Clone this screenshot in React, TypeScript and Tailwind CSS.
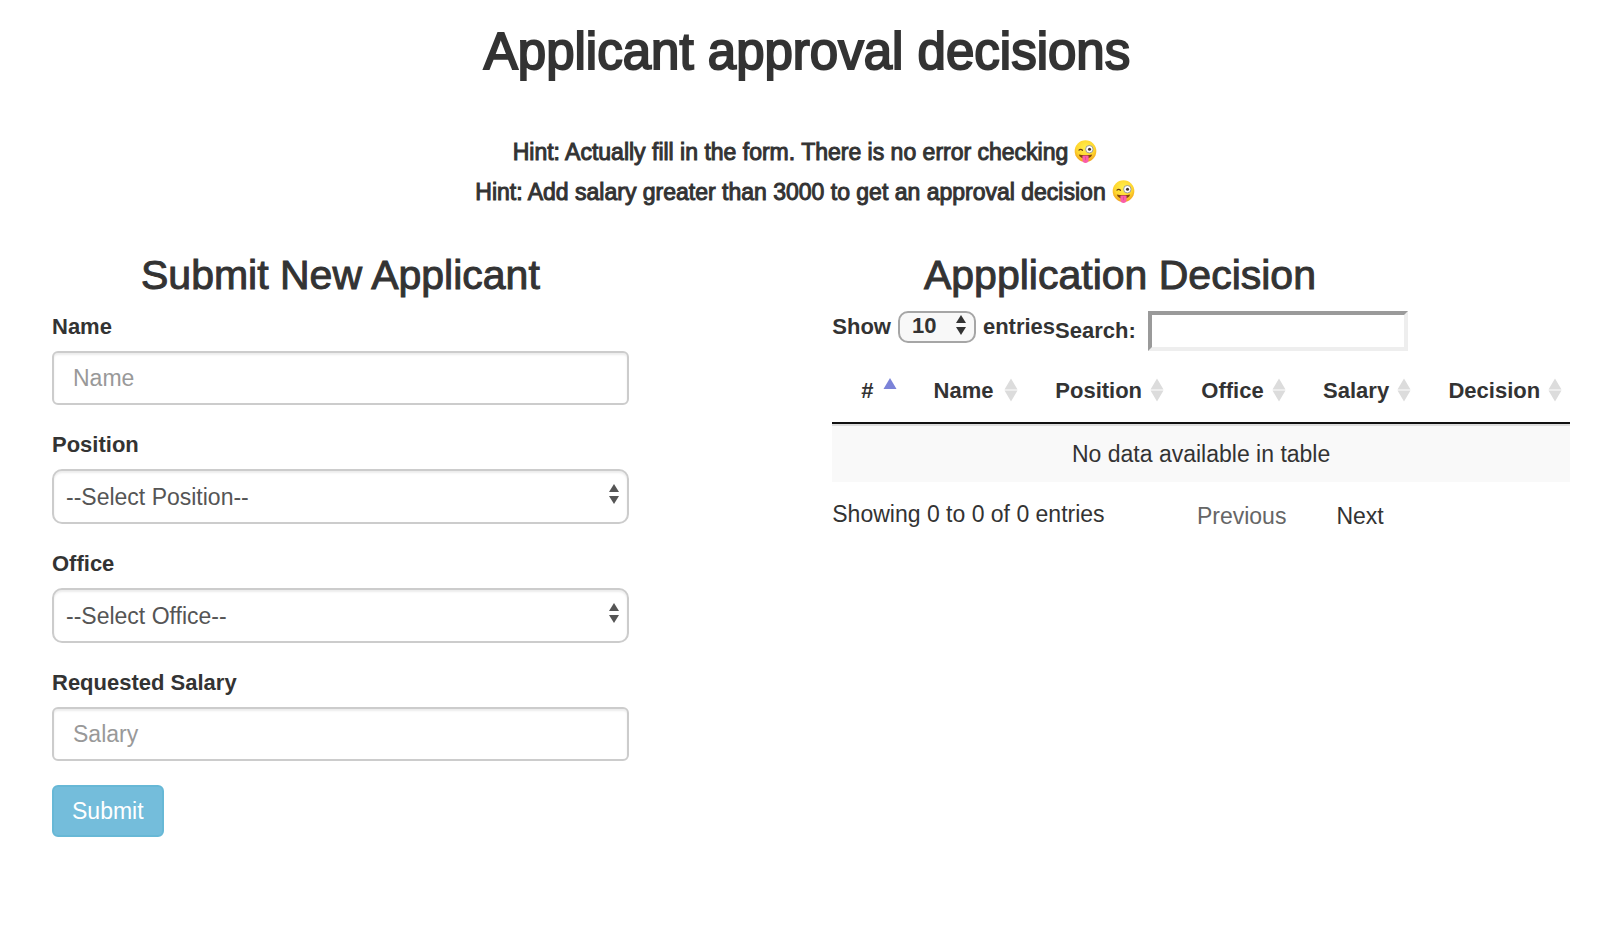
import React from "react";

function WinkingFace() {
  return (
    <svg viewBox="0 0 24 25" className="h-6 w-[23px] shrink-0" role="img" aria-label="winking face with tongue">
      <defs>
        <radialGradient id="face" cx="50%" cy="35%" r="65%">
          <stop offset="0" stopColor="#fff04e" />
          <stop offset="0.65" stopColor="#ffd62e" />
          <stop offset="1" stopColor="#f0a01c" />
        </radialGradient>
      </defs>
      <circle cx="12" cy="11.500" r="11.3" fill="url(#face)" />
      <path d="M5.200 10.600c1-1 2.600-1 3.600.1" stroke="#6b3f10" strokeWidth="1.300" strokeLinecap="round" fill="none" />
      <circle cx="16" cy="9.600" r="3.900" fill="#fff" stroke="#8f8f8f" strokeWidth="0.900" />
      <circle cx="16.200" cy="9.600" r="1.600" fill="#40332c" />
      <path d="M5 15c3.400.9 10.600.9 14 0-.6 2.600-3.300 4.400-7 4.400s-6.400-1.800-7-4.400z" fill="#84430f" />
      <path d="M8.800 16.500c1.900-.6 4.500-.6 6.400 0v4.400c0 2-1.300 3.200-3.200 3.200s-3.200-1.200-3.200-3.200z" fill="#fb5ea8" />
      <path d="M12 17.500v3.500" stroke="#e0408c" strokeWidth="0.700" />
    </svg>
  );
}

function SelectArrows({ className }: { className: string }) {
  return (
    <svg viewBox="0 0 10 20" className={"pointer-events-none absolute h-5 w-[10px] " + className} fill="currentColor" aria-hidden="true">
      <path d="M5 0l5 8H0zM5 20l5-8H0z" />
    </svg>
  );
}

function SortIcon({ active }: { active: boolean }) {
  return (
    <svg viewBox="0 0 14 24" className="h-6 w-[14px] shrink-0" aria-hidden="true">
      {active ? (
        <path d="M7 0l6.500 11h-13z" fill="#7b83d8" />
      ) : (
        <path d="M7 0.500l6.500 11h-13zM7 23.500l6.500-11h-13z" fill="#dcdcdc" />
      )}
    </svg>
  );
}

const heading = "text-center text-[41px] leading-[44px] [-webkit-text-stroke:1px_#333]";
const label = "text-[22px] leading-8 font-bold";
const field =
  "w-full border-2 border-[#ccc] bg-white text-[23px] text-[#555] shadow-[inset_0_2px_2px_rgba(0,0,0,0.075)] placeholder:text-[#999]";

function TextField({ id, title, placeholder }: { id: string; title: string; placeholder: string }) {
  return (
    <div className="flex flex-col gap-2">
      <label htmlFor={id} className={label}>{title}</label>
      <input id={id} type="text" placeholder={placeholder} className={field + " h-[54px] rounded-md px-[19px]"} />
    </div>
  );
}

function SelectField({ id, title, prompt, options }: { id: string; title: string; prompt: string; options: string[] }) {
  return (
    <div className="flex flex-col gap-2">
      <label htmlFor={id} className={label}>{title}</label>
      <div className="relative text-[#555]">
        <select id={id} className={field + " block h-[55px] appearance-none rounded-[10px] px-3"}>
          <option>{prompt}</option>
          {options.map((o) => <option key={o}>{o}</option>)}
        </select>
        <SelectArrows className="right-[10px] top-[15px]" />
      </div>
    </div>
  );
}

const columns = [
  { name: "#", width: "w-[9.8%]" },
  { name: "Name", width: "w-[16.5%]" },
  { name: "Position", width: "w-[19.8%]" },
  { name: "Office", width: "w-[16.5%]" },
  { name: "Salary", width: "w-[17%]" },
  { name: "Decision", width: "w-[20.4%]" },
];

export default function App() {
  return (
    <main className="min-h-screen bg-white pt-6 pr-[54px] pb-10 pl-[52px] font-['Liberation_Sans',Arial,sans-serif] text-[23px] leading-8 text-[#333]">
      <header className="pr-2 text-center">
        <h1 className="text-[51px] leading-[56px] [-webkit-text-stroke:2px_#333]">Applicant approval decisions</h1>
        <div className="mt-14 flex flex-col items-center gap-2 pr-1 text-[23px] leading-8 [-webkit-text-stroke:1px_#333]">
          <p className="flex items-center gap-[6px]">Hint: Actually fill in the form. There is no error checking <WinkingFace /></p>
          <p className="flex items-center gap-[6px]">Hint: Add salary greater than 3000 to get an approval decision <WinkingFace /></p>
        </div>
      </header>

      <div className="mt-[45px] flex items-start justify-between">
        <section className="w-[38%]">
          <h2 className={heading}>Submit New Applicant</h2>
          <form className="mt-[14px] flex flex-col gap-6" onSubmit={(e) => e.preventDefault()}>
            <TextField id="name" title="Name" placeholder="Name" />
            <SelectField id="position" title="Position" prompt="--Select Position--" options={["Developer", "Manager"]} />
            <SelectField id="office" title="Office" prompt="--Select Office--" options={["London", "New York"]} />
            <TextField id="salary" title="Requested Salary" placeholder="Salary" />
            <button type="submit" className="h-[52px] self-start rounded-md border-2 border-[#67b8d6] bg-[#74bddb] px-[18px] text-[23px] text-white">
              Submit
            </button>
          </form>
        </section>

        <section className="w-[48.6%]">
          <div className="w-[78%]">
            <h2 className={heading}>Appplication Decision</h2>
            <div className="mt-[14px] flex items-start text-[22px] font-bold">
              <label className="flex items-center gap-[7px]">
                Show
                <span className="relative">
                  <select className="block h-8 w-[78px] appearance-none rounded-[10px] border-2 border-[#a6a6a6] bg-[#f8f8f8] pb-[2px] pl-3 leading-[26px]">
                    <option>10</option>
                    <option>25</option>
                    <option>50</option>
                    <option>100</option>
                  </select>
                  <SelectArrows className="right-[10px] top-1" />
                </span>
                entries
              </label>
              <label className="flex min-w-0 flex-1 items-center gap-3">
                Search:
                <input type="search" className="h-10 w-full min-w-0 border-4 border-t-[#9a9a9a] border-r-[#eee] border-b-[#eee] border-l-[#9a9a9a] bg-white px-1" />
              </label>
            </div>
          </div>

          <table className="mt-4 w-full table-fixed border-separate border-spacing-0">
            <thead>
              <tr>
                {columns.map((c, i) => (
                  <th key={c.name} className={c.width + " border-b-2 border-[#111] p-0"}>
                    <button type="button" className="flex h-[55px] w-full items-start justify-between pt-2 pr-2 pl-[29px] text-[22px] leading-8 font-bold">
                      {c.name}
                      <span className="pt-[3px]">
                        <SortIcon active={i === 0} />
                      </span>
                    </button>
                  </th>
                ))}
              </tr>
            </thead>
            <tbody>
              <tr className="bg-[#f9f9f9]">
                <td colSpan={6} className="h-[58px] border-t-2 border-[#ddd] p-0 text-center">No data available in table</td>
              </tr>
            </tbody>
          </table>

          <div className="mt-4 flex w-[78%] items-start justify-between">
            <p>Showing 0 to 0 of 0 entries</p>
            <nav className="mt-[2px] flex gap-[50px] pr-6" aria-label="Table pages">
              <button type="button" className="text-[#666]">Previous</button>
              <button type="button">Next</button>
            </nav>
          </div>
        </section>
      </div>
    </main>
  );
}
